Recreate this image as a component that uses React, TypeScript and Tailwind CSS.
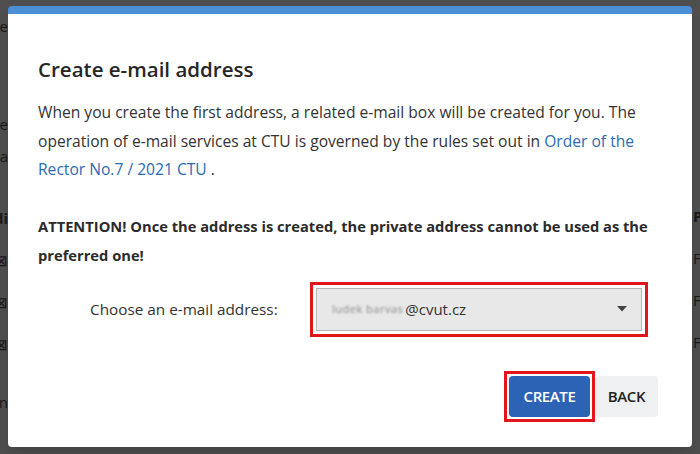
const font = { fontFamily: '"Open Sans", "Liberation Sans", sans-serif' };

const leftGhost = [
  { t: "e", y: "mt-[16px]" },
  { t: "e", y: "mt-[78px]" },
  { t: "ua", y: "mt-[12px]" },
  { t: "di", y: "mt-[42px]", bold: true },
  { t: "⊠", y: "mt-[22px]" },
  { t: "⊠", y: "mt-[22px]" },
  { t: "⊠", y: "mt-[22px]" },
  { t: "n", y: "mt-[38px]" },
];

const rightGhost = [
  { t: "P", y: "mt-[206px]", bold: true },
  { t: "F", y: "mt-[22px]" },
  { t: "F", y: "mt-[22px]" },
  { t: "F", y: "mt-[22px]" },
];

export default function App() {
  return (
    <div className="relative w-[700px] h-[454px] overflow-hidden bg-[#4e4e4e]" style={font}>
      {/* dimmed page behind the dialog */}
      <div className="flex justify-between h-full">
        <div className="w-[8px] flex flex-col items-end text-[15px] leading-[20px] text-[#1a1a1a]">
          {leftGhost.map((g, i) => (
            <span key={i} className={`${g.y} whitespace-nowrap ${g.bold ? "font-bold" : ""}`}>
              {g.t}
            </span>
          ))}
        </div>
        <div className="w-[8px] flex flex-col text-[15px] leading-[20px] text-[#1a1a1a] overflow-hidden">
          {rightGhost.map((g, i) => (
            <span key={i} className={`${g.y} pl-[1px] ${g.bold ? "font-bold" : ""}`}>
              {g.t}
            </span>
          ))}
        </div>
      </div>

      {/* dialog */}
      <div className="absolute left-[8px] top-[6px] w-[684px] h-[441px] bg-white rounded-[4px] overflow-hidden border-t-[8px] border-[#4a8fd6] shadow-lg">
        <div className="px-[30px] pt-[40px] text-[#2b2b2b]">
          <h1 className="text-[20.5px] leading-[30px] font-semibold text-[#262626]">Create e-mail address</h1>
          <p className="mt-[14px] text-[15.6px] leading-[28.5px] text-[#333]">
            When you create the first address, a related e-mail box will be created for you. The operation of e-mail
            services at CTU is governed by the rules set out in{" "}
            <span className="text-[#2a6bb4]">Order of the Rector No.7 / 2021 CTU</span> .
          </p>
          <p className="mt-[28px] text-[14.7px] leading-[29px] font-bold text-[#2b2b2b]">
            ATTENTION! Once the address is created, the private address cannot be used as the preferred one!
          </p>

          <div className="mt-[12px] flex items-center">
            <span className="ml-[52px] w-[220px] text-[15.3px] text-[#333]">Choose an e-mail address:</span>
            <div className="border-[3px] border-[#e0161b] p-[3px]">
              <div className="w-[326px] h-[43px] bg-[#e8e8e8] border border-[#b5b5b5] flex items-center pl-[15px] pr-[14px]">
                <span className="text-[15px] text-[#333] flex items-center">
                  <span className="blur-[1.2px] text-[#888] text-[11px] tracking-[0.5px] mr-[2px]">ludek barvas</span>
                  @cvut.cz
                </span>
                <svg className="ml-auto" width="10" height="6" viewBox="0 0 10 6">
                  <path d="M0 0 L10 0 L5 5.5 Z" fill="#444" />
                </svg>
              </div>
            </div>
          </div>

          <div className="mt-[34px] flex justify-end items-center pr-[4px]">
            <div className="border-[3px] border-[#e0161b] p-[2px]">
              <button className="w-[81px] h-[41px] rounded-[4px] bg-[#2c63b4] text-white text-[15px] font-semibold tracking-[-0.4px]">
                CREATE
              </button>
            </div>
            <button className="w-[63px] h-[41px] rounded-[3px] bg-[#eef0f2] text-[#222] text-[15px] font-semibold tracking-[-0.4px]">
              BACK
            </button>
          </div>
        </div>
      </div>
    </div>
  );
}
